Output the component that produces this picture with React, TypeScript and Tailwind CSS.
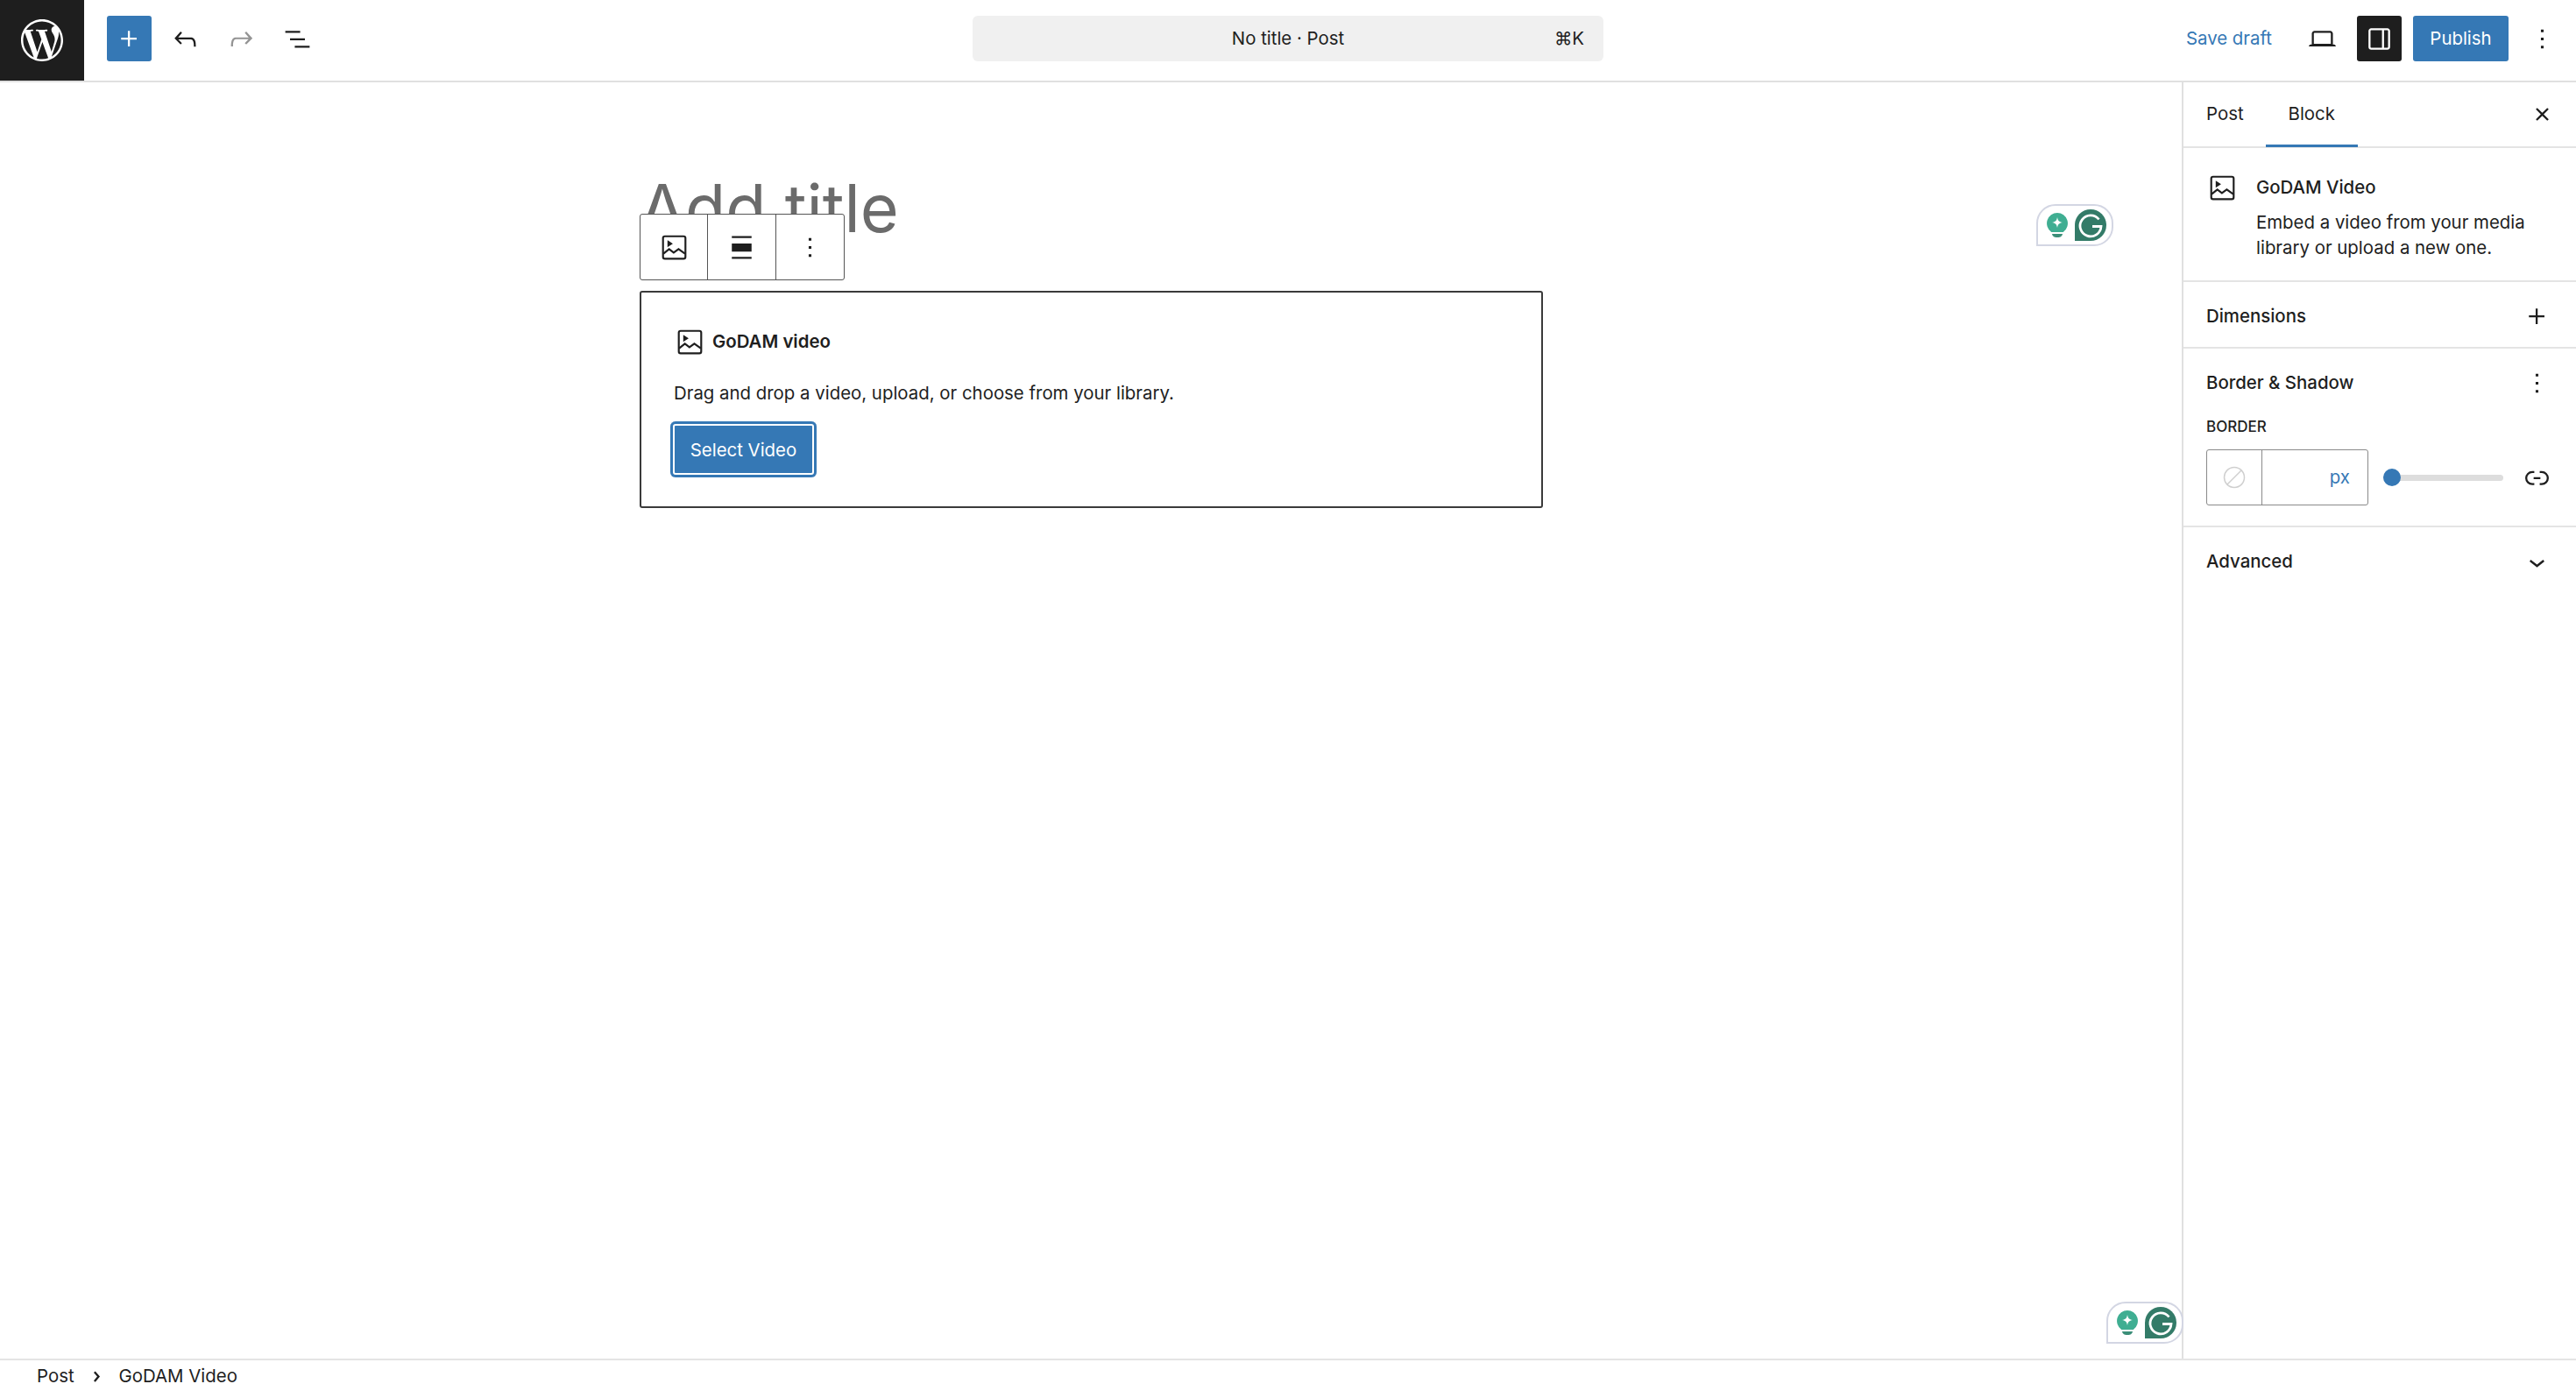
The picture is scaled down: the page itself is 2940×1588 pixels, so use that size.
import React from "react";
import { SiWordpress } from "react-icons/si";

const BLUE = "#3578b5";

function Icon({ d, className = "" }: { d: string; className?: string }) {
  return (
    <svg viewBox="0 0 24 24" fill="currentColor" className={`w-[37px] h-[37px] shrink-0 ${className}`}>
      <path d={d} />
    </svg>
  );
}

const icons = {
  plus: "M11 12.5V17.5H12.5V12.5H17.5V11H12.5V6H11V11H6V12.5H11Z",
  undo: "M18.3 11.7c-.6-.6-1.4-.9-2.3-.9H6.7l2.9-3.3-1.1-1-4.5 5L8.5 16l1-1-2.7-2.7H16c.5 0 .9.2 1.3.5 1 1 1 3.4 1 4.5v.3h1.5v-.2c0-1.5 0-4.3-1.5-5.7z",
  redo: "M15.6 6.5l-1.1 1 2.9 3.3H8c-.9 0-1.7.3-2.3.9-1.4 1.5-1.4 4.2-1.4 5.6v.2h1.5v-.3c0-1.1 0-3.5 1-4.5.3-.3.7-.5 1.3-.5h9.2L14.5 15l1.1 1.1 4.6-4.6-4.6-5z",
  list: "M3 6h11v1.5H3V6Zm3.5 5.5h11V13h-11v-1.5ZM21 17H10v1.5h11V17Z",
  laptop: "M20.5 16h-.7V8c0-1.1-.9-2-2-2H6.2c-1.1 0-2 .9-2 2v8h-.7c-.8 0-1.5.7-1.5 1.5h20c0-.8-.7-1.5-1.5-1.5zM5.7 8c0-.3.2-.5.5-.5h11.6c.3 0 .5.2.5.5v7.6H5.7V8z",
  drawer: "M18 4H6c-1.1 0-2 .9-2 2v12c0 1.1.9 2 2 2h12c1.1 0 2-.9 2-2V6c0-1.1-.9-2-2-2zm-4 14.5H6c-.3 0-.5-.2-.5-.5V6c0-.3.2-.5.5-.5h8v13zm4.5-.5c0 .3-.2.5-.5.5h-2.5v-13H18c.3 0 .5.2.5.5v12z",
  more: "M13 19h-2v-2h2v2zm0-6h-2v-2h2v2zm0-6h-2V5h2v2z",
  close: "M12 13.06l3.712 3.713 1.061-1.06L13.061 12l3.712-3.712-1.06-1.06L12 10.938 8.288 7.227l-1.061 1.06L10.939 12l-3.712 3.712 1.06 1.061L12 13.061z",
  chevronDown: "M17.5 11.6L12 16l-5.5-4.4.9-1.2L12 14l4.5-3.6 1 1.2z",
  chevronRight: "M10.8622 8.04053L14.2805 12.0286L10.8622 16.0167L9.72327 15.0405L12.3049 12.0286L9.72327 9.01672L10.8622 8.04053Z",
  link: "M10 17.389H8.444A5.194 5.194 0 1 1 8.444 7H10v1.5H8.444a3.694 3.694 0 0 0 0 7.389H10v1.5ZM14 7h1.556a5.194 5.194 0 0 1 0 10.39H14v-1.5h1.556a3.694 3.694 0 0 0 0-7.39H14V7Zm-4.5 6h5v-1.5h-5V13Z",
  wide: "M4.7 3.6h14.6v1.5H4.7zM4.7 9h14.6v6H4.7zM4.7 18.9h14.6v1.5H4.7z",
};

function VideoIcon() {
  return (
    <svg viewBox="0 0 24 24" fill="none" className="w-[37px] h-[37px] shrink-0 text-[#1e1e1e]">
      <rect x="3.7" y="3.7" width="16.6" height="16.6" rx="1.4" stroke="currentColor" strokeWidth="1.4" />
      <path d="M7 6.6v5.2l4-2.6z" fill="currentColor" />
      <path d="M4 16.6l4.2-3.4 3.4 2.6 3.6-2.6 4.8 3.4" stroke="currentColor" strokeWidth="1.4" />
    </svg>
  );
}

// Grammarly floating widget
function GrammarlyBadge({ className }: { className: string }) {
  return (
    <div className={`absolute z-10 w-[88px] h-[48px] bg-white border-2 border-[#d3d6e3] rounded-[22px] rounded-bl-none flex items-center pl-[10px] gap-[8px] ${className}`}>
      <svg viewBox="0 0 24 28" className="w-[24px] h-[28px] shrink-0">
        <path d="M12 0a12 12 0 0 1 7 21.7V22H5v-.3A12 12 0 0 1 12 0z" fill="#3fae92" />
        <path d="M12 5c.7 3.8 2 5.3 6 6-4 .7-5.300 2.200-6 6-.7-3.800-2-5.300-6-6 4-.7 5.300-2.200 6-6z" fill="#fff" />
        <path d="M6 24h12c-.5 2.500-2 4-6 4s-5.500-1.500-6-4z" fill="#3b8e78" />
      </svg>
      <svg viewBox="0 0 36 36" className="w-[36px] h-[36px] shrink-0">
        <path d="M18 0a18 18 0 0 1 0 36H0V18A18 18 0 0 1 18 0z" fill="#337b68" />
        <path d="M27.500 11.500A12 12 0 1 0 30 19.500H20" fill="none" stroke="#fff" strokeWidth="2.800" />
      </svg>
    </div>
  );
}

function Panel({ title, icon, children, last }: { title: string; icon: string; children?: React.ReactNode; last?: boolean }) {
  return (
    <div className={`pl-[26px] pr-[25px] ${last ? "" : "border-b-2 border-[#e4e4e4]"}`}>
      <div className="h-[74px] pt-[4px] flex items-center justify-between font-medium text-[#1e1e1e]">
        {title}
        <Icon d={icon} className="mr-[1px]" />
      </div>
      {children}
    </div>
  );
}

export default function App() {
  return (
    <div className="h-screen flex flex-col bg-white text-[#1e1e1e] text-[20.4px] font-['Inter',sans-serif] overflow-hidden">
      {/* TOP BAR */}
      <header className="h-[94px] shrink-0 border-b-2 border-[#e0e0e0] grid grid-cols-[1fr_720px_1fr] items-start">
        <div className="flex items-start h-[92px]">
          <div className="w-[96px] h-[92px] bg-[#1e1e1e] flex items-center justify-center">
            <SiWordpress className="w-[48px] h-[48px] text-white" />
          </div>
          <div className="flex items-center h-[88px]">
            <button style={{ backgroundColor: BLUE }} className="ml-[26px] w-[51px] h-[52px] rounded-[3px] flex items-center justify-center text-white">
              <Icon d={icons.plus} />
            </button>
            <div className="ml-[6px] w-[64px] flex justify-center"><Icon d={icons.undo} /></div>
            <div className="w-[64px] flex justify-center"><Icon d={icons.redo} className="text-[#949494]" /></div>
            <div className="w-[64px] flex justify-center"><Icon d={icons.list} /></div>
          </div>
        </div>

        <div className="relative mt-[18px] h-[52px] bg-[#f0f0f0] rounded-[6px] flex items-center justify-center">
          No title · Post
          <span className="absolute right-[22px]">⌘K</span>
        </div>

        <div className="flex items-center justify-end h-[88px] pr-[20px]">
          <span style={{ color: BLUE }} className="mr-[39px]">Save draft</span>
          <Icon d={icons.laptop} className="mr-[21px]" />
          <button className="w-[51px] h-[52px] bg-[#1e1e1e] rounded-[3px] flex items-center justify-center text-white">
            <Icon d={icons.drawer} />
          </button>
          <button style={{ backgroundColor: BLUE }} className="ml-[13px] w-[109px] h-[52px] rounded-[3px] text-white">Publish</button>
          <Icon d={icons.more} className="ml-[20px]" />
        </div>
      </header>

      <div className="flex-1 flex min-h-0">
        {/* CANVAS */}
        <main className="relative flex-1 min-w-0">
          <div className="relative w-[1031px] ml-[730px] pt-[96px]">
            <h1 className="text-[75.5px] leading-[96px] font-normal text-[#6b6b6b]">Add title</h1>
            <div className="absolute top-[150px] left-0 h-[76px] flex bg-white border border-[#555] rounded-[3px] z-10">
              <div className="w-[77px] flex items-center justify-center border-r border-[#555]"><VideoIcon /></div>
              <div className="w-[78px] flex items-center justify-center border-r border-[#555]"><Icon d={icons.wide} /></div>
              <div className="w-[77px] flex items-center justify-center"><Icon d={icons.more} /></div>
            </div>

            <div className="mt-[46px] h-[248px] border-2 border-[#3a3a3a] rounded-[3px] pt-[38px] pl-[37px]">
              <div className="flex items-center h-[37px] gap-[7px] font-semibold">
                <VideoIcon />
                GoDAM video
              </div>
              <p className="mt-[25px] leading-[29px]">Drag and drop a video, upload, or choose from your library.</p>
              <button
                style={{ backgroundColor: BLUE }}
                className="mt-[18px] ml-[-4px] w-[167px] h-[64px] pt-[2px] rounded-[6px] text-white shadow-[inset_0_0_0_3px_#3578b5,inset_0_0_0_5px_#ffffff]"
              >
                Select Video
              </button>
            </div>
          </div>
          <GrammarlyBadge className="top-[139px] right-[78px]" />
          <GrammarlyBadge className="bottom-[17px] right-[-2px]" />
        </main>

        {/* SIDEBAR */}
        <aside className="w-[450px] shrink-0 border-l-2 border-[#e0e0e0]">
          <div className="h-[75px] border-b-2 border-[#e4e4e4] flex items-center relative">
            <div className="h-full flex items-center pl-[26px] pr-[25px]">Post</div>
            <div style={{ borderColor: BLUE }} className="h-[75px] pt-[3px] flex items-center px-[26px] border-b-[3px]">Block</div>
            <Icon d={icons.close} className="absolute right-[20px] top-[18px]" />
          </div>

          <div className="h-[153px] border-b-2 border-[#e4e4e4] pl-[26px] pt-[27px] flex gap-[20px]">
            <div className="h-[37px]"><VideoIcon /></div>
            <div>
              <div className="font-medium leading-[36px]">GoDAM Video</div>
              <p className="mt-[7px] leading-[29px] w-[345px]">Embed a video from your media library or upload a new one.</p>
            </div>
          </div>

          <Panel title="Dimensions" icon={icons.plus} />
          <Panel title="Border & Shadow" icon={icons.more}>
            <div className="text-[17px] font-medium leading-[20px] mt-[5px]">BORDER</div>
            <div className="mt-[16px] pb-[23px] flex items-center">
              <div className="w-[185px] h-[64px] flex border border-[#8a8a8a] rounded-[3px]">
                <div className="w-[63px] border-r border-[#8a8a8a] flex items-center justify-center">
                  <svg viewBox="0 0 26 26" className="w-[26px] h-[26px]" fill="none" stroke="#cfcfcf" strokeWidth="1.500">
                    <circle cx="13" cy="13" r="11.500" />
                    <path d="M5 21L21 5" />
                  </svg>
                </div>
                <div style={{ color: BLUE }} className="flex-1 flex items-center justify-end pr-[20px]">px</div>
              </div>
              <div className="relative ml-[17px] w-[137px] h-[7px] bg-[#dddddd] rounded-full">
                <div style={{ backgroundColor: BLUE }} className="absolute left-0 top-[-7px] w-[20px] h-[20px] rounded-full" />
              </div>
              <Icon d={icons.link} className="ml-[20px]" />
            </div>
          </Panel>
          <Panel title="Advanced" icon={icons.chevronDown} last />
        </aside>
      </div>

      {/* BREADCRUMB */}
      <footer className="h-[37px] shrink-0 pt-[2px] border-t-2 border-[#e4e4e4] flex items-center pl-[42px]">
        Post
        <Icon d={icons.chevronRight} className="w-[28px] h-[28px] mx-[7px]" />
        GoDAM Video
      </footer>
    </div>
  );
}
